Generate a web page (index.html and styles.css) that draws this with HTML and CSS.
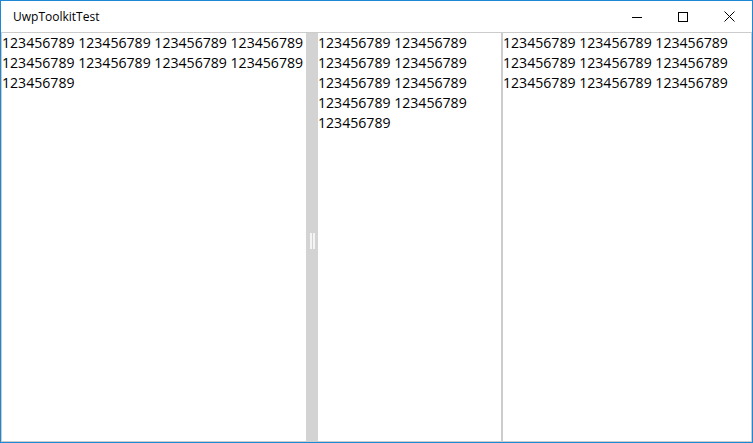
FILE: index.html
```html
<!DOCTYPE html>
<html lang="en">
<head>
    <meta charset="UTF-8">
    <title>UwpToolkitTest</title>
    <link rel="stylesheet" href="styles.css">
</head>
<body>
    <div class="window">
        <header class="titlebar">
            <span class="title">UwpToolkitTest</span>
            <div class="caption-buttons">
                <span class="caption-btn">
                    <svg width="10" height="10" viewBox="0 0 10 10"><path d="M0 5.5H10" stroke="#000" stroke-width="1"/></svg>
                </span>
                <span class="caption-btn">
                    <svg width="10" height="10" viewBox="0 0 10 10"><rect x="0.5" y="0.5" width="9" height="9" fill="none" stroke="#000" stroke-width="1"/></svg>
                </span>
                <span class="caption-btn">
                    <svg width="11" height="11" viewBox="0 0 11 11"><path d="M0.5 0.5L10.5 10.5M10.5 0.5L0.5 10.5" stroke="#000" stroke-width="1"/></svg>
                </span>
            </div>
        </header>
        <main class="content">
            <div class="pane pane-left">123456789 123456789 123456789 123456789 123456789 123456789 123456789 123456789 123456789</div>
            <div class="splitter">
                <div class="grip"><span></span><span></span></div>
            </div>
            <div class="pane pane-middle">123456789 123456789 123456789 123456789 123456789 123456789 123456789 123456789 123456789</div>
            <div class="divider"></div>
            <div class="pane pane-right">123456789 123456789 123456789 123456789 123456789 123456789 123456789 123456789 123456789</div>
        </main>
    </div>
</body>
</html>
```

FILE: styles.css
```css
/* Ventana */
body {
    margin: 0;
    padding: 0;
    background-color: #fff;
    font-family: "Open Sans", "Noto Sans", sans-serif;
}

.window {
    width: 753px;
    height: 443px;
    box-sizing: border-box;
    border: 1px solid #1e88d6;
    display: flex;
    flex-direction: column;
    background-color: #fff;
}

/* Barra de titulo */
.titlebar {
    height: 31px;
    display: flex;
    align-items: center;
    justify-content: space-between;
}

.title {
    padding-left: 12px;
    font-size: 12px;
    color: #000;
}

.caption-buttons {
    display: flex;
    height: 100%;
}

.caption-btn {
    width: 46px;
    height: 100%;
    display: flex;
    align-items: center;
    justify-content: center;
}

.caption-btn svg {
    display: block;
}

/* Contenido */
.content {
    flex: 1;
    display: flex;
    border: 1px solid #cccccc;
    min-height: 0;
}

.pane {
    font-size: 14.1px;
    line-height: 20px;
    color: #000;
}

.pane-left {
    width: 304px;
}

.pane-middle {
    width: 183px;
}

.pane-right {
    flex: 1;
}

.splitter {
    width: 12px;
    background-color: #d3d3d3;
    display: flex;
    align-items: center;
    justify-content: center;
}

.grip {
    display: flex;
    gap: 1px;
    margin-top: 7px;
}

.grip span {
    width: 2px;
    height: 16px;
    background-color: #f4f4f4;
}

.divider {
    width: 2px;
    background-color: #cccccc;
}
```
